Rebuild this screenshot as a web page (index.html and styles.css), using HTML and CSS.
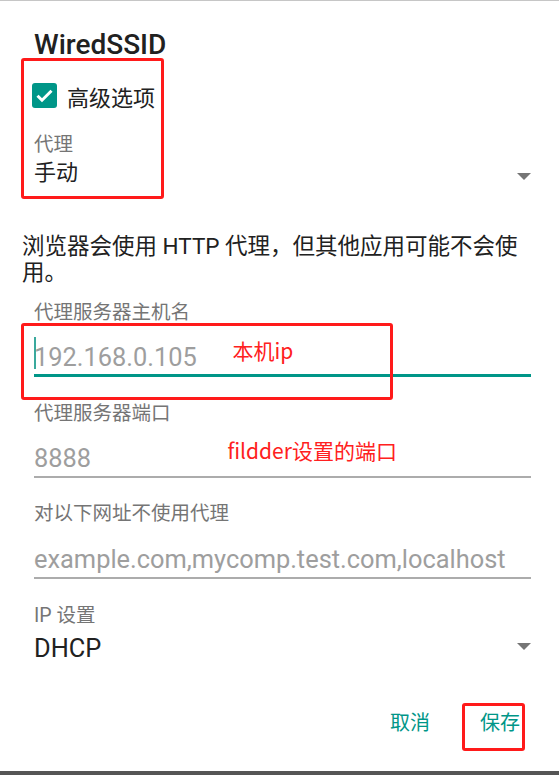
FILE: index.html
```html
<!DOCTYPE html>
<html lang="zh-CN">
<head>
<meta charset="utf-8">
<title>WiredSSID</title>
<link rel="stylesheet" href="styles.css">
</head>
<body>
  <div class="dialog">
    <h1 class="title">WiredSSID</h1>

    <div class="check-row">
      <svg class="checkbox" viewBox="0 0 25 25" width="25" height="25" aria-hidden="true">
        <rect x="0" y="0" width="25" height="25" rx="3" ry="3" fill="#009688"/>
        <polyline points="5.5,12.8 10,17.2 19.5,7.8" fill="none" stroke="#ffffff" stroke-width="3"/>
      </svg>
      <span class="check-label">高级选项</span>
    </div>

    <div class="spinner">
      <div class="label">代理</div>
      <div class="spinner-value">
        <span class="cjk-value">手动</span>
        <span class="caret-down"></span>
      </div>
    </div>

    <p class="note">浏览器会使用 HTTP 代理，但其他应用可能不会使用。</p>

    <div class="field">
      <div class="label">代理服务器主机名</div>
      <div class="input input-focused">
        <span class="cursor"></span>
        <span class="hint">192.168.0.105</span>
      </div>
    </div>

    <div class="field field-gap">
      <div class="label">代理服务器端口</div>
      <div class="input">
        <span class="hint">8888</span>
      </div>
    </div>

    <div class="field field-gap">
      <div class="label">对以下网址不使用代理</div>
      <div class="input">
        <span class="hint">example.com,mycomp.test.com,localhost</span>
      </div>
    </div>

    <div class="spinner spinner-ip">
      <div class="label">IP 设置</div>
      <div class="spinner-value">
        <span>DHCP</span>
        <span class="caret-down"></span>
      </div>
    </div>

    <div class="actions">
      <button class="action">取消</button>
      <button class="action">保存</button>
    </div>
  </div>
  <div class="navbar"></div>

  <div class="annot-box annot-box-1"></div>
  <div class="annot-box annot-box-2"></div>
  <div class="annot-box annot-box-3"></div>
  <div class="annot-text annot-text-1">本机ip</div>
  <div class="annot-text annot-text-2">fildder设置的端口</div>
</body>
</html>
```

FILE: styles.css
```css
html, body {
  margin: 0;
  padding: 0;
}

body {
  height: 775px;
  display: flex;
  flex-direction: column;
  position: relative;
  overflow: hidden;
  background: #ffffff;
  font-family: Roboto, "Noto Sans CJK SC", sans-serif;
  color: #212121;
}

.dialog {
  flex: 1;
  border-top: 1px solid #c6c6c6;
  padding: 28px 28px 0 34px;
  background: #ffffff;
}

.title {
  margin: 0;
  font-size: 28px;
  line-height: 32px;
  font-weight: 500;
  color: #212121;
}

.check-row {
  display: flex;
  align-items: flex-start;
  gap: 10px;
  margin: 22px 0 0 -2px;
}

.checkbox {
  display: block;
  flex: none;
}

.check-label {
  font-size: 22px;
  line-height: 26px;
  margin-top: 2.5px;
}

.label {
  font-size: 19.5px;
  line-height: 24px;
  color: #757575;
}

.spinner {
  margin-top: 21.8px;
}

.spinner-ip {
  margin-top: 25.3px;
}

.spinner-value {
  display: flex;
  justify-content: space-between;
  align-items: flex-start;
  margin-top: 5.6px;
  font-size: 25.4px;
  line-height: 30px;
  color: #212121;
}

.spinner-ip .spinner-value {
  margin-top: 4.6px;
}

.cjk-value {
  font-size: 22px;
  line-height: 20px;
}

.caret-down {
  width: 0;
  height: 0;
  border-left: 7px solid transparent;
  border-right: 7px solid transparent;
  border-top: 7px solid #757575;
  margin-top: 10.5px;
}

.note {
  margin: 49.8px 0 0 -12px;
  font-size: 22.5px;
  line-height: 26px;
  color: #212121;
}

.field {
  margin-top: 16px;
}

.field-gap {
  margin-top: 24.3px;
}

.input {
  position: relative;
  margin-top: 17.1px;
  font-size: 25.4px;
  line-height: 30px;
  padding-bottom: 3.5px;
  border-bottom: 2px solid #acacac;
}

.input-focused {
  padding-bottom: 2.5px;
  border-bottom: 3px solid #009688;
}

.hint {
  color: #9e9e9e;
  white-space: nowrap;
}

.cursor {
  position: absolute;
  left: 0;
  top: -4.5px;
  width: 2px;
  height: 32px;
  background: #3aa99d;
}

.actions {
  display: flex;
  justify-content: flex-end;
  gap: 28px;
  margin-top: 47.7px;
}

.action {
  background: none;
  border: 0;
  padding: 0 11px;
  margin: 0;
  font-family: Roboto, "Noto Sans CJK SC", sans-serif;
  font-size: 20px;
  line-height: 24px;
  font-weight: 400;
  color: #009688;
}

.navbar {
  height: 4px;
  flex: none;
  background: #555555;
}

.annot-box {
  position: absolute;
  box-sizing: border-box;
  border: 3px solid #ff1a1a;
  border-radius: 3px;
}

.annot-box-1 {
  left: 21px;
  top: 58px;
  width: 143px;
  height: 141px;
}

.annot-box-2 {
  left: 21px;
  top: 323px;
  width: 372px;
  height: 77px;
}

.annot-box-3 {
  left: 462px;
  top: 703px;
  width: 63px;
  height: 48px;
}

.annot-text {
  position: absolute;
  font-family: "Noto Sans CJK SC", sans-serif;
  font-size: 21px;
  line-height: 20px;
  color: #ff2020;
  white-space: nowrap;
}

.annot-text-1 {
  left: 232.5px;
  top: 339.8px;
}

.annot-text-2 {
  left: 227.5px;
  top: 439.8px;
}
```
